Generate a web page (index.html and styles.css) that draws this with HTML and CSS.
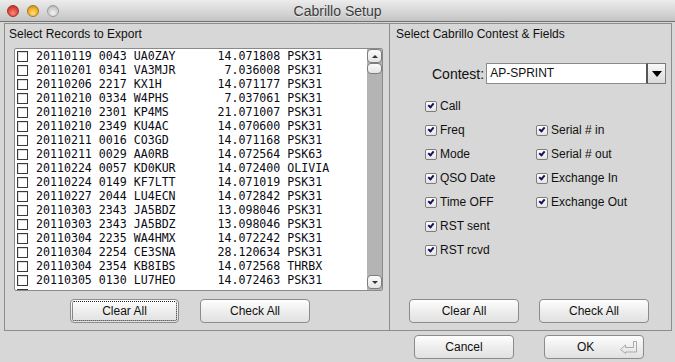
FILE: index.html
```html
<!DOCTYPE HTML>
<html>

<head>
    <meta http-equiv="Content-Type" content="text/html; charset=utf-8" />
    <link rel="stylesheet" href="styles.css">
    <title>Cabrillo Setup</title>
</head>

<body>
    <div class="window">
        <div class="titlebar">
            <div class="lights">
                <span class="light red"></span>
                <span class="light yellow"></span>
                <span class="light gray"></span>
            </div>
            <div class="title">Cabrillo Setup</div>
            <div></div>
        </div>

        <div class="panels">
            <!-- left: records -->
            <div class="panel panel-left">
                <div class="panel-title">Select Records to Export</div>
                <div class="listbox">
                    <div class="rows">
                        <div class="row"><span class="box"></span><span class="rec">20110119 0043 UA0ZAY      14.071808 PSK31</span></div>
                        <div class="row"><span class="box"></span><span class="rec">20110201 0341 VA3MJR       7.036008 PSK31</span></div>
                        <div class="row"><span class="box"></span><span class="rec">20110206 2217 KX1H        14.071177 PSK31</span></div>
                        <div class="row"><span class="box"></span><span class="rec">20110210 0334 W4PHS        7.037061 PSK31</span></div>
                        <div class="row"><span class="box"></span><span class="rec">20110210 2301 KP4MS       21.071007 PSK31</span></div>
                        <div class="row"><span class="box"></span><span class="rec">20110210 2349 KU4AC       14.070600 PSK31</span></div>
                        <div class="row"><span class="box"></span><span class="rec">20110211 0016 CO3GD       14.071168 PSK31</span></div>
                        <div class="row"><span class="box"></span><span class="rec">20110211 0029 AA0RB       14.072564 PSK63</span></div>
                        <div class="row"><span class="box"></span><span class="rec">20110224 0057 KD0KUR      14.072400 OLIVIA</span></div>
                        <div class="row"><span class="box"></span><span class="rec">20110224 0149 KF7LTT      14.071019 PSK31</span></div>
                        <div class="row"><span class="box"></span><span class="rec">20110227 2044 LU4ECN      14.072842 PSK31</span></div>
                        <div class="row"><span class="box"></span><span class="rec">20110303 2343 JA5BDZ      13.098046 PSK31</span></div>
                        <div class="row"><span class="box"></span><span class="rec">20110303 2343 JA5BDZ      13.098046 PSK31</span></div>
                        <div class="row"><span class="box"></span><span class="rec">20110304 2235 WA4HMX      14.072242 PSK31</span></div>
                        <div class="row"><span class="box"></span><span class="rec">20110304 2254 CE3SNA      28.120634 PSK31</span></div>
                        <div class="row"><span class="box"></span><span class="rec">20110304 2354 KB8IBS      14.072568 THRBX</span></div>
                        <div class="row"><span class="box"></span><span class="rec">20110305 0130 LU7HEO      14.072463 PSK31</span></div>
                        <div class="row"><span class="box"></span></div>
                    </div>
                    <div class="scrollbar">
                        <div class="sb-btn"><span class="arr-up"></span></div>
                        <div class="sb-thumb"></div>
                        <div class="sb-track"></div>
                        <div class="sb-btn"><span class="arr-down"></span></div>
                    </div>
                </div>
                <div class="btn-row btn-row-left">
                    <button class="btn focus" type="button">Clear All</button>
                    <button class="btn wide" type="button">Check All</button>
                </div>
            </div>

            <!-- right: contest & fields -->
            <div class="panel panel-right">
                <div class="panel-title title-right">Select Cabrillo Contest &amp; Fields</div>
                <div class="contest">
                    <span class="contest-label">Contest:</span>
                    <div class="combo">
                        <div class="combo-text">AP-SPRINT</div>
                        <div class="combo-btn"><span class="tri"></span></div>
                    </div>
                </div>
                <div class="fields">
                    <div class="col col-1">
                        <div class="field"><span class="check"></span>Call</div>
                        <div class="field"><span class="check"></span>Freq</div>
                        <div class="field"><span class="check"></span>Mode</div>
                        <div class="field"><span class="check"></span>QSO Date</div>
                        <div class="field"><span class="check"></span>Time OFF</div>
                        <div class="field"><span class="check"></span>RST sent</div>
                        <div class="field"><span class="check"></span>RST rcvd</div>
                    </div>
                    <div class="col col-2">
                        <div class="field"><span class="check"></span>Serial # in</div>
                        <div class="field"><span class="check"></span>Serial # out</div>
                        <div class="field"><span class="check"></span>Exchange In</div>
                        <div class="field"><span class="check"></span>Exchange Out</div>
                    </div>
                </div>
                <div class="btn-row btn-row-right">
                    <button class="btn wide" type="button">Clear All</button>
                    <button class="btn wide" type="button">Check All</button>
                </div>
            </div>
        </div>

        <div class="footer">
            <button class="btn dlg" type="button">Cancel</button>
            <button class="btn dlg ok" type="button">
                <span>OK</span>
                <svg class="ret" width="18" height="13" viewBox="0 0 18 13">
                    <path d="M0.5 8.5 L5.5 4 L5.5 6.5 L13.5 6.5 L13.5 0.5 L16.5 0.5 L16.5 11 L5.5 11 L5.5 12.5 Z" fill="none" stroke="#a9a9a9" stroke-width="1" />
                </svg>
            </button>
        </div>
    </div>
</body>

</html>
```

FILE: styles.css
```css
html,
body {
    margin: 0;
    padding: 0;
}

body {
    width: 675px;
    height: 362px;
    overflow: hidden;
    background: #d7d7d7;
    font-family: "Liberation Sans", Arial, sans-serif;
    font-size: 12px;
    color: #111;
}

.window {
    height: 362px;
    background: #d7d7d7;
}

/* title bar */

.titlebar {
    height: 21px;
    border-bottom: 1px solid #727272;
    background: linear-gradient(#ececec, #d9d9d9 50%, #c3c3c3);
    display: grid;
    grid-template-columns: 60px 1fr 60px;
    align-items: center;
}

.lights {
    display: flex;
    gap: 8px;
    padding-left: 7px;
}

.light {
    width: 12px;
    height: 12px;
    border-radius: 50%;
    box-sizing: border-box;
}

.light.red {
    background: radial-gradient(circle at 50% 70%, #fb8a7c, #e0463a 55%, #a8281f);
    border: 1px solid #9c3228;
}

.light.yellow {
    background: radial-gradient(circle at 50% 70%, #fde08b, #f0b028 55%, #b57a10);
    border: 1px solid #a9781c;
}

.light.gray {
    background: radial-gradient(circle at 50% 70%, #f2f2f2, #cfcfcf 55%, #a5a5a5);
    border: 1px solid #9a9a9a;
}

.title {
    text-align: center;
    font-size: 14px;
    color: #3c3c3c;
    text-shadow: 0 1px 0 rgba(255, 255, 255, .5);
}

/* panels */

.panels {
    display: flex;
    margin: 1px 0 0 4px;
    height: 308px;
}

.panel {
    box-sizing: border-box;
    border: 1px solid #8d8d8d;
    display: flex;
    flex-direction: column;
    height: 308px;
}

.panel-left {
    width: 386px;
}

.panel-right {
    width: 282px;
    border-left: none;
}

.panel-title {
    padding: 3px 0 0 4px;
    line-height: 14px;
    color: #111;
}

.title-right {
    padding-left: 6px;
}

/* record list */

.listbox {
    box-sizing: border-box;
    width: 369px;
    height: 243px;
    margin: 7px 0 0 9px;
    border: 1px solid #8a8a8a;
    border-radius: 2px;
    background: #fff;
    display: flex;
}

.rows {
    flex: 1;
    overflow: hidden;
    padding-left: 2px;
}

.row {
    height: 14px;
    display: flex;
    align-items: center;
}

.box {
    box-sizing: border-box;
    width: 11px;
    height: 11px;
    border: 1px solid #3a3a3a;
    background: #fff;
    box-shadow: inset 1px 1px 0 #ddd;
    margin-right: 8px;
    flex: none;
}

.rec {
    white-space: pre;
    font-family: "DejaVu Sans Mono", "Liberation Mono", monospace;
    font-size: 11.6px;
    color: #0a0a14;
}

.scrollbar {
    width: 15px;
    display: flex;
    flex-direction: column;
    padding-bottom: 1px;
    background: #b4b4b4;
}

.sb-btn,
.sb-thumb {
    box-sizing: border-box;
    border: 1px solid #7d7d7d;
    border-radius: 4px;
    background: linear-gradient(#fafafa, #e4e4e4);
    display: flex;
    align-items: center;
    justify-content: center;
}

.sb-btn {
    height: 14px;
}

.sb-thumb {
    height: 11px;
}

.sb-track {
    flex: 1;
}

.arr-up,
.arr-down {
    width: 0;
    height: 0;
    border-left: 3px solid transparent;
    border-right: 3px solid transparent;
}

.arr-up {
    border-bottom: 3px solid #333;
}

.arr-down {
    border-top: 3px solid #333;
}

/* buttons */

.btn-row {
    display: flex;
    margin-top: auto;
    margin-bottom: 7px;
}

.btn-row-left {
    padding-left: 65px;
    gap: 21px;
}

.btn-row-right {
    padding-left: 19px;
    gap: 20px;
}

.btn {
    box-sizing: border-box;
    width: 109px;
    height: 24px;
    padding: 0;
    border: 1px solid #8b8b8b;
    border-radius: 4px;
    background: linear-gradient(#fefefe, #eeeeee 50%, #e1e1e1);
    font-family: "Liberation Sans", Arial, sans-serif;
    font-size: 12px;
    color: #111;
}

.btn.wide {
    width: 110px;
}

.btn.focus {
    outline: 1px dotted #222;
    outline-offset: -3px;
}

/* contest */

.contest {
    display: flex;
    align-items: center;
    margin: 22px 0 0 42px;
    gap: 2px;
}

.contest-label {
    font-size: 14px;
    color: #111;
}

.combo {
    display: flex;
    width: 180px;
    height: 21px;
}

.combo-text {
    flex: 1;
    box-sizing: border-box;
    border: 1px solid #8a8a8a;
    border-right: 2px solid #555;
    background: #fff;
    padding-left: 3px;
    line-height: 19px;
    font-size: 12px;
}

.combo-btn {
    width: 18px;
    box-sizing: border-box;
    border: 1px solid #7a7a7a;
    border-left: none;
    background: linear-gradient(#f8f8f8, #dadada);
    display: flex;
    align-items: center;
    justify-content: center;
}

.tri {
    width: 0;
    height: 0;
    border-left: 5px solid transparent;
    border-right: 5px solid transparent;
    border-top: 6px solid #000;
}

/* fields */

.fields {
    display: flex;
    margin: 10px 0 0 35px;
}

.col {
    display: flex;
    flex-direction: column;
}

.col-1 {
    width: 111px;
}

.col-2 {
    padding-top: 24px;
}

.field {
    height: 24px;
    display: flex;
    align-items: center;
    white-space: nowrap;
}

.check {
    position: relative;
    box-sizing: border-box;
    width: 12px;
    height: 11px;
    margin-right: 3px;
    border: 1px solid #7c7c7c;
    border-radius: 2px;
    background: linear-gradient(#ffffff, #e3e3e3);
}

.check::after {
    content: "";
    position: absolute;
    left: 2px;
    top: 1px;
    width: 4px;
    height: 2px;
    border-left: 2px solid #14145a;
    border-bottom: 2px solid #14145a;
    transform: rotate(-50deg);
}

/* dialog buttons */

.footer {
    display: flex;
    gap: 30px;
    padding: 4px 0 0 414px;
}

.btn.dlg {
    width: 100px;
}

.btn.ok {
    display: flex;
    align-items: center;
    padding-left: 32px;
    gap: 26px;
}

.ret {
    display: block;
}
```
